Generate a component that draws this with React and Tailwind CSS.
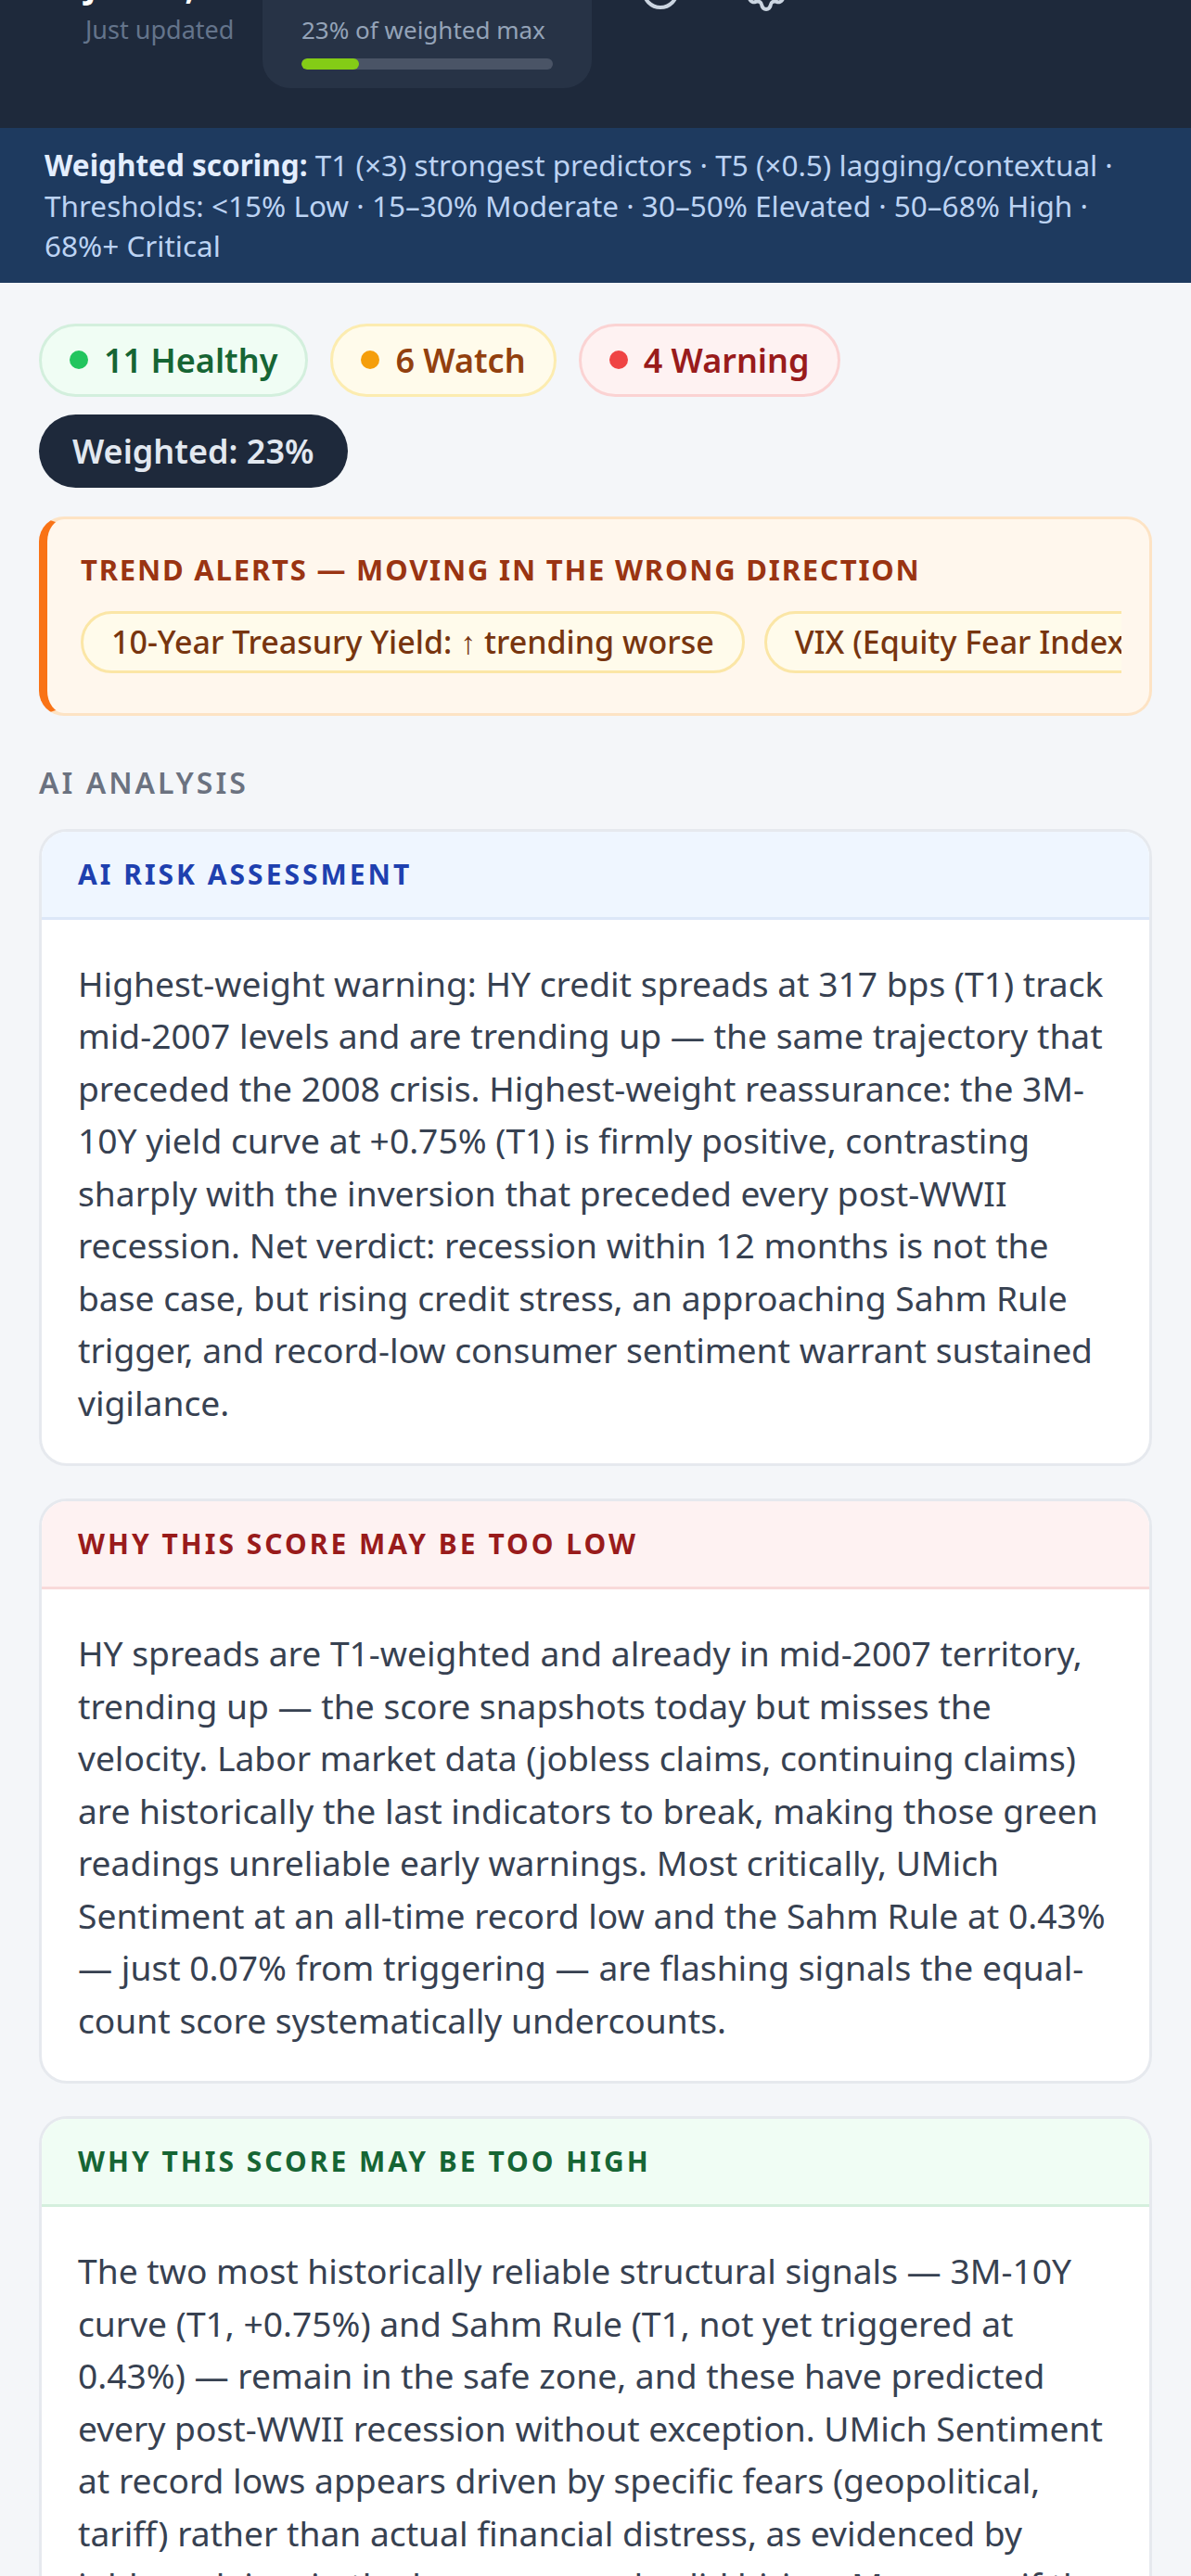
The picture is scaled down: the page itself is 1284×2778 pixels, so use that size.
import { RotateCw, Settings } from 'lucide-react';

function Pill({ dot, bg, border, text, children }) {
  return (
    <div className={`inline-flex items-center gap-[17px] rounded-full border-[3px] px-[30px] py-[12px] text-[36px] font-semibold leading-[49px] ${bg} ${border} ${text}`}>
      <span className={`h-[20px] w-[20px] shrink-0 rounded-full ${dot}`} />
      <span>{children}</span>
    </div>
  );
}

function Card({ title, headBg, headBorder, headText, children, className = '' }) {
  return (
    <div className={`overflow-hidden rounded-[30px] border-[3px] border-[#e6e9ee] bg-white ${className}`}>
      <div className={`border-b-[3px] px-[39px] py-[25px] text-[30px] font-bold uppercase leading-[42px] tracking-[3px] ${headBg} ${headBorder} ${headText}`}>
        {title}
      </div>
      <div className="px-[39px] pt-[41px] pb-[37px] text-[37.2px] leading-[56.5px] text-[#374151]">
        {children}
      </div>
    </div>
  );
}

export default function App() {
  return (
    <div className="min-h-[2778px] bg-[#f4f6f9] font-['Noto_Sans',sans-serif]">
      <header className="h-[138px] overflow-hidden bg-[#1e293b]">
        <div className="-mt-[72px] flex items-start pl-[92px]">
          <div className="mt-[36px] w-[191px] shrink-0">
            <div className="whitespace-nowrap text-[36px] font-bold leading-[44px] text-white">Jan 12, 2026</div>
            <div className="mt-[4px] whitespace-nowrap text-[27px] leading-[40px] text-[#64748b]">Just updated</div>
          </div>
          <div className="w-[355px] shrink-0 rounded-[30px] bg-[#273346] px-[42px] pt-[24px] pb-[20px]">
            <div className="text-[48px] font-bold leading-[60px] text-[#84cc16]">23%</div>
            <div className="whitespace-nowrap text-[26px] leading-[40px] text-[#94a3b8]">23% of weighted max</div>
            <div className="mt-[11px] h-[12px] overflow-hidden rounded-full bg-[#4a5466]">
              <div className="h-full rounded-full bg-[#84cc16]" style={{ width: '23%' }} />
            </div>
          </div>
          <div className="ml-[50px] mt-[38px] flex gap-[66px] text-[#cbd5e1]">
            <RotateCw size={48} strokeWidth={2} />
            <Settings size={48} strokeWidth={2} />
          </div>
        </div>
      </header>

      <div className="bg-[#1e3a5f] px-[48px] py-[18px] text-[31.5px] leading-[43.5px] text-[#bcd3f3]">
        <span className="font-bold text-[#e3eeff]">Weighted scoring:</span> T1 (×3) strongest predictors · T5 (×0.5) lagging/contextual · Thresholds: &lt;15% Low · 15–30% Moderate · 30–50% Elevated · 50–68% High · 68%+ Critical
      </div>

      <main className="px-[42px] pt-[44px] pb-[60px]">
        <div className="flex flex-wrap gap-x-[24px] gap-y-[19px]">
          <Pill dot="bg-[#22c55e]" bg="bg-[#f0fdf4]" border="border-[#d3efdd]" text="text-[#166534]">11 Healthy</Pill>
          <Pill dot="bg-[#f59e0b]" bg="bg-[#fffbeb]" border="border-[#fcecb0]" text="text-[#92400e]">6 Watch</Pill>
          <Pill dot="bg-[#ef4444]" bg="bg-[#fef2f2]" border="border-[#fbd3d3]" text="text-[#991b1b]">4 Warning</Pill>
          <div className="rounded-full bg-[#1e293b] px-[36px] py-[15px] text-[36px] font-semibold leading-[49px] text-[#e2e8f0]">
            Weighted: 23%
          </div>
        </div>

        <div className="mt-[31px] rounded-[27px] border-[3px] border-l-[9px] border-[#fde3c4] border-l-[#f97316] bg-[#fff7ed] pl-[36px] pr-[30px] pt-[33px] pb-[43px]">
          <div className="whitespace-nowrap text-[31px] font-bold uppercase leading-[42px] tracking-[1.8px] text-[#9a3412]">
            Trend Alerts — Moving in the Wrong Direction
          </div>
          <div className="mt-[24px] flex w-full gap-[21px] overflow-hidden">
            <div className="shrink-0 whitespace-nowrap rounded-full border-[3px] border-[#fbe6a6] bg-[#fffbeb] px-[30px] py-[8px] text-[34px] font-medium leading-[45px] text-[#78350f]">
              10-Year Treasury Yield: ↑ trending worse
            </div>
            <div className="shrink-0 whitespace-nowrap rounded-full border-[3px] border-[#fbe6a6] bg-[#fffbeb] px-[30px] py-[8px] text-[34px] font-medium leading-[45px] text-[#78350f]">
              VIX (Equity Fear Index): ↑ trending worse
            </div>
          </div>
        </div>

        <div className="mt-[50px] mb-[29px] text-[32px] font-semibold uppercase leading-[43px] tracking-[3px] text-[#6b7280]">
          AI Analysis
        </div>

        <Card title="AI Risk Assessment" headBg="bg-[#eff6ff]" headBorder="border-[#dce7f8]" headText="text-[#1e40af]">
          Highest-weight warning: HY credit spreads at 317 bps (T1) track mid-2007 levels and are trending up — the same trajectory that preceded the 2008 crisis. Highest-weight reassurance: the 3M-10Y yield curve at +0.75% (T1) is firmly positive, contrasting sharply with the inversion that preceded every post-WWII recession. Net verdict: recession within 12 months is not the base case, but rising credit stress, an approaching Sahm Rule trigger, and record-low consumer sentiment warrant sustained vigilance.
        </Card>

        <Card className="mt-[35px]" title="Why this score may be too low" headBg="bg-[#fef2f2]" headBorder="border-[#f8dada]" headText="text-[#991b1b]">
          HY spreads are T1-weighted and already in mid-2007 territory, trending up — the score snapshots today but misses the velocity. Labor market data (jobless claims, continuing claims) are historically the last indicators to break, making those green readings unreliable early warnings. Most critically, UMich Sentiment at an all-time record low and the Sahm Rule at 0.43% — just 0.07% from triggering — are flashing signals the equal-count score systematically undercounts.
        </Card>

        <Card className="mt-[35px]" title="Why this score may be too high" headBg="bg-[#f0fdf4]" headBorder="border-[#d5efdd]" headText="text-[#166534]">
          The two most historically reliable structural signals — 3M-10Y curve (T1, +0.75%) and Sahm Rule (T1, not yet triggered at 0.43%) — remain in the safe zone, and these have predicted every post-WWII recession without exception. UMich Sentiment at record lows appears driven by specific fears (geopolitical, tariff) rather than actual financial distress, as evidenced by jobless claims in the low range and solid hiring. Moreover, if the credit cycle holds, the weighted score may overstate near-term risk.
        </Card>
      </main>
    </div>
  );
}
